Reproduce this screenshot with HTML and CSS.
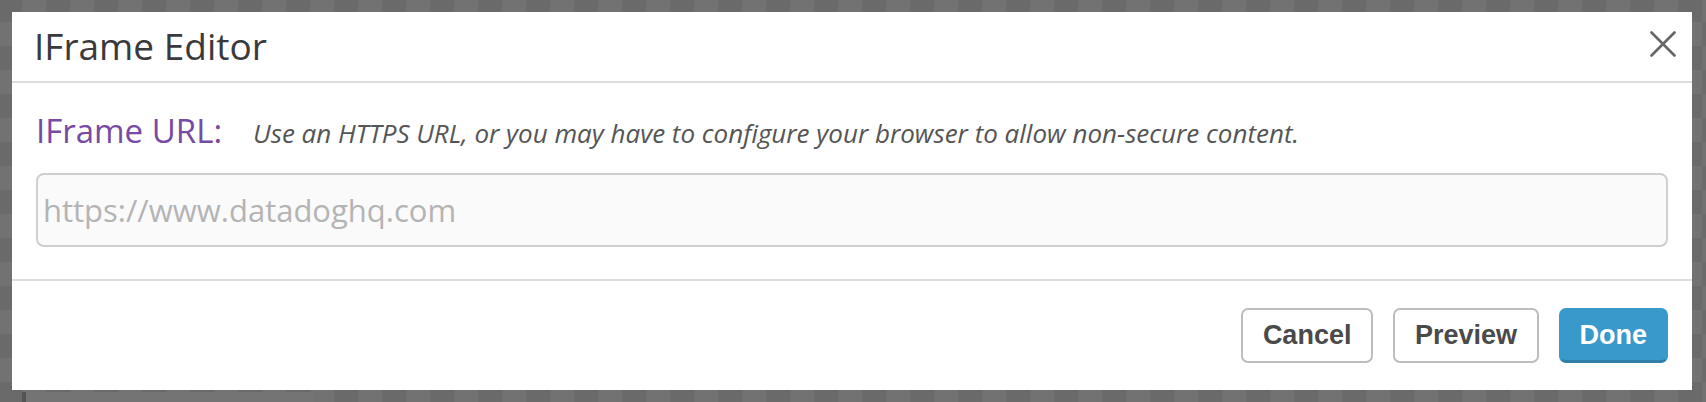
FILE: index.html
```html
<!DOCTYPE html>
<html lang="en">
<head>
<meta charset="utf-8">
<title>IFrame Editor</title>
<link rel="stylesheet" href="styles.css">
</head>
<body>
<div class="modal">
  <div class="modal-header">
    <h1 class="modal-title">IFrame Editor</h1>
    <button class="close-btn" aria-label="Close">
      <svg width="26" height="26" viewBox="0 0 26 26"><path d="M1.5 1.5 L24.5 24.5 M24.5 1.5 L1.5 24.5" stroke="#666" stroke-width="2.6" stroke-linecap="round" fill="none"/></svg>
    </button>
  </div>
  <div class="modal-body">
    <div class="field-row">
      <label class="field-label" for="url">IFrame URL:</label>
      <span class="field-hint">Use an HTTPS URL, or you may have to configure your browser to allow non-secure content.</span>
    </div>
    <input id="url" class="url-input" type="text" placeholder="https://www.datadoghq.com">
  </div>
  <div class="modal-footer">
    <button class="btn">Cancel</button>
    <button class="btn btn-wide">Preview</button>
    <button class="btn btn-primary">Done</button>
  </div>
</div>
<div class="under-bar"></div>
</body>
</html>
```
FILE: styles.css
```css
html, body {
  margin: 0;
  height: 100%;
}
body {
  padding: 12px;
  box-sizing: border-box;
  overflow: hidden;
  background-color: #6c6c6c;
  background-image: conic-gradient(#727272 0 25%, #6a6a6a 0 50%, #727272 0 75%, #6a6a6a 0);
  background-size: 48px 48px;
  background-position: -2px -2px;
  font-family: "Open Sans", "Noto Sans", sans-serif;
}
.modal {
  width: 1680px;
  height: 378px;
  background: #fff;
  display: flex;
  flex-direction: column;
}
.modal-header {
  height: 69px;
  border-bottom: 2px solid #dedede;
  display: flex;
  align-items: center;
  justify-content: space-between;
  padding: 0 16px 0 22px;
}
.modal-title {
  margin: 0;
  font-weight: 400;
  font-size: 37px;
  color: #3a3a3d;
  line-height: 1;
  margin-top: -2px;
}
.close-btn {
  background: none;
  border: 0;
  padding: 0;
  width: 26px;
  height: 26px;
  display: flex;
  margin-top: -6px;
}
.modal-body {
  height: 198px;
  border-bottom: 2px solid #dedede;
  padding: 0 24px;
  box-sizing: border-box;
}
.field-row {
  display: flex;
  align-items: baseline;
  gap: 31px;
  height: 90px;
  padding-top: 26px;
  box-sizing: border-box;
}
.field-label {
  font-size: 33px;
  color: #774aa4;
  line-height: 44px;
}
.field-hint {
  font-size: 26px;
  font-style: italic;
  color: #555;
}
.url-input {
  display: block;
  width: 100%;
  height: 74px;
  box-sizing: border-box;
  border: 2px solid #cfcfcf;
  border-radius: 8px;
  background: #fafafa;
  padding: 0 5px;
  font-family: "Open Sans", "Noto Sans", sans-serif;
  font-size: 31px;
  color: #333;
  outline: none;
}
.url-input::placeholder {
  color: #b4b4b4;
}
.modal-footer {
  flex: 1;
  display: flex;
  justify-content: flex-end;
  align-items: center;
  gap: 20px;
  padding: 0 24px 0 0;
}
.btn {
  height: 55px;
  padding: 0 20px;
  box-sizing: border-box;
  border: 2px solid #bdbdbd;
  border-radius: 7px;
  background: #fff;
  font-family: "Liberation Sans", Arial, sans-serif;
  font-weight: 700;
  font-size: 27px;
  color: #4a4a4a;
}
.btn-wide {
  padding: 0 19.5px;
}
.btn-primary {
  background: #3a99cb;
  border-color: #3a99cb;
  border-bottom: 3px solid #2f7fa9;
  color: #fff;
  padding: 0 19px;
}
.under-bar {
  width: 288px;
  height: 12px;
  margin: 2px 0 0 10px;
  background: #747474;
  border-left: 4px solid #545454;
}
```
